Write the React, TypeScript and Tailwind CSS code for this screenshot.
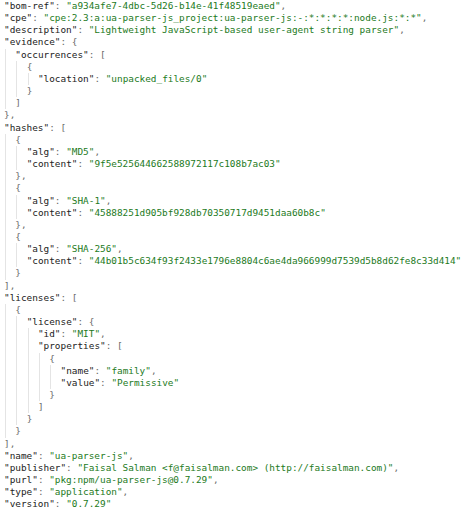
import React from "react";

const source = `"bom-ref": "a934afe7-4dbc-5d26-b14e-41f48519eaed",
"cpe": "cpe:2.3:a:ua-parser-js_project:ua-parser-js:-:*:*:*:*:node.js:*:*",
"description": "Lightweight JavaScript-based user-agent string parser",
"evidence": {
  "occurrences": [
    {
      "location": "unpacked_files/0"
    }
  ]
},
"hashes": [
  {
    "alg": "MD5",
    "content": "9f5e525644662588972117c108b7ac03"
  },
  {
    "alg": "SHA-1",
    "content": "45888251d905bf928db70350717d9451daa60b8c"
  },
  {
    "alg": "SHA-256",
    "content": "44b01b5c634f93f2433e1796e8804c6ae4da966999d7539d5b8d62fe8c33d414"
  }
],
"licenses": [
  {
    "license": {
      "id": "MIT",
      "properties": [
        {
          "name": "family",
          "value": "Permissive"
        }
      ]
    }
  }
],
"name": "ua-parser-js",
"publisher": "Faisal Salman <f@faisalman.com> (http://faisalman.com)",
"purl": "pkg:npm/ua-parser-js@0.7.29",
"type": "application",
"version": "0.7.29"`;

const lines = source.split("\n").map((raw) => {
  const trimmed = raw.replace(/^ +/, "");
  return { depth: (raw.length - trimmed.length) / 2, text: trimmed };
});

const Tokens = ({ text }: { text: string }) => {
  const parts: React.ReactNode[] = [];
  const re = /("(?:[^"\\]|\\.)*")(\s*:)?|[^"]+/g;
  let m: RegExpExecArray | null;
  let k = 0;
  while ((m = re.exec(text))) {
    if (m[1] && m[2]) {
      parts.push(<span key={k++} className="text-[#222222]">{m[1]}</span>);
      parts.push(<span key={k++} className="text-[#6b6b6b]">{m[2]}</span>);
    } else if (m[1]) {
      parts.push(<span key={k++} className="text-[#1c7a1c]">{m[1]}</span>);
    } else {
      parts.push(<span key={k++} className="text-[#6b6b6b]">{m[0]}</span>);
    }
  }
  return <>{parts}</>;
};

export default function App() {
  return (
    <div className="w-[464px] h-[512px] bg-white overflow-hidden pl-1 font-['DejaVu_Sans_Mono',monospace] text-[9.4px] leading-[12.17px]">
      {lines.map((line, i) => (
        <div key={i} className="flex h-[12.17px] whitespace-pre">
          {Array.from({ length: line.depth }).map((_, g) => (
            <div key={g} className="w-[11.32px] shrink-0 flex">
              <div className="ml-px w-px bg-[#e4e4e4]" />
            </div>
          ))}
          <span>
            <Tokens text={line.text} />
          </span>
        </div>
      ))}
    </div>
  );
}
